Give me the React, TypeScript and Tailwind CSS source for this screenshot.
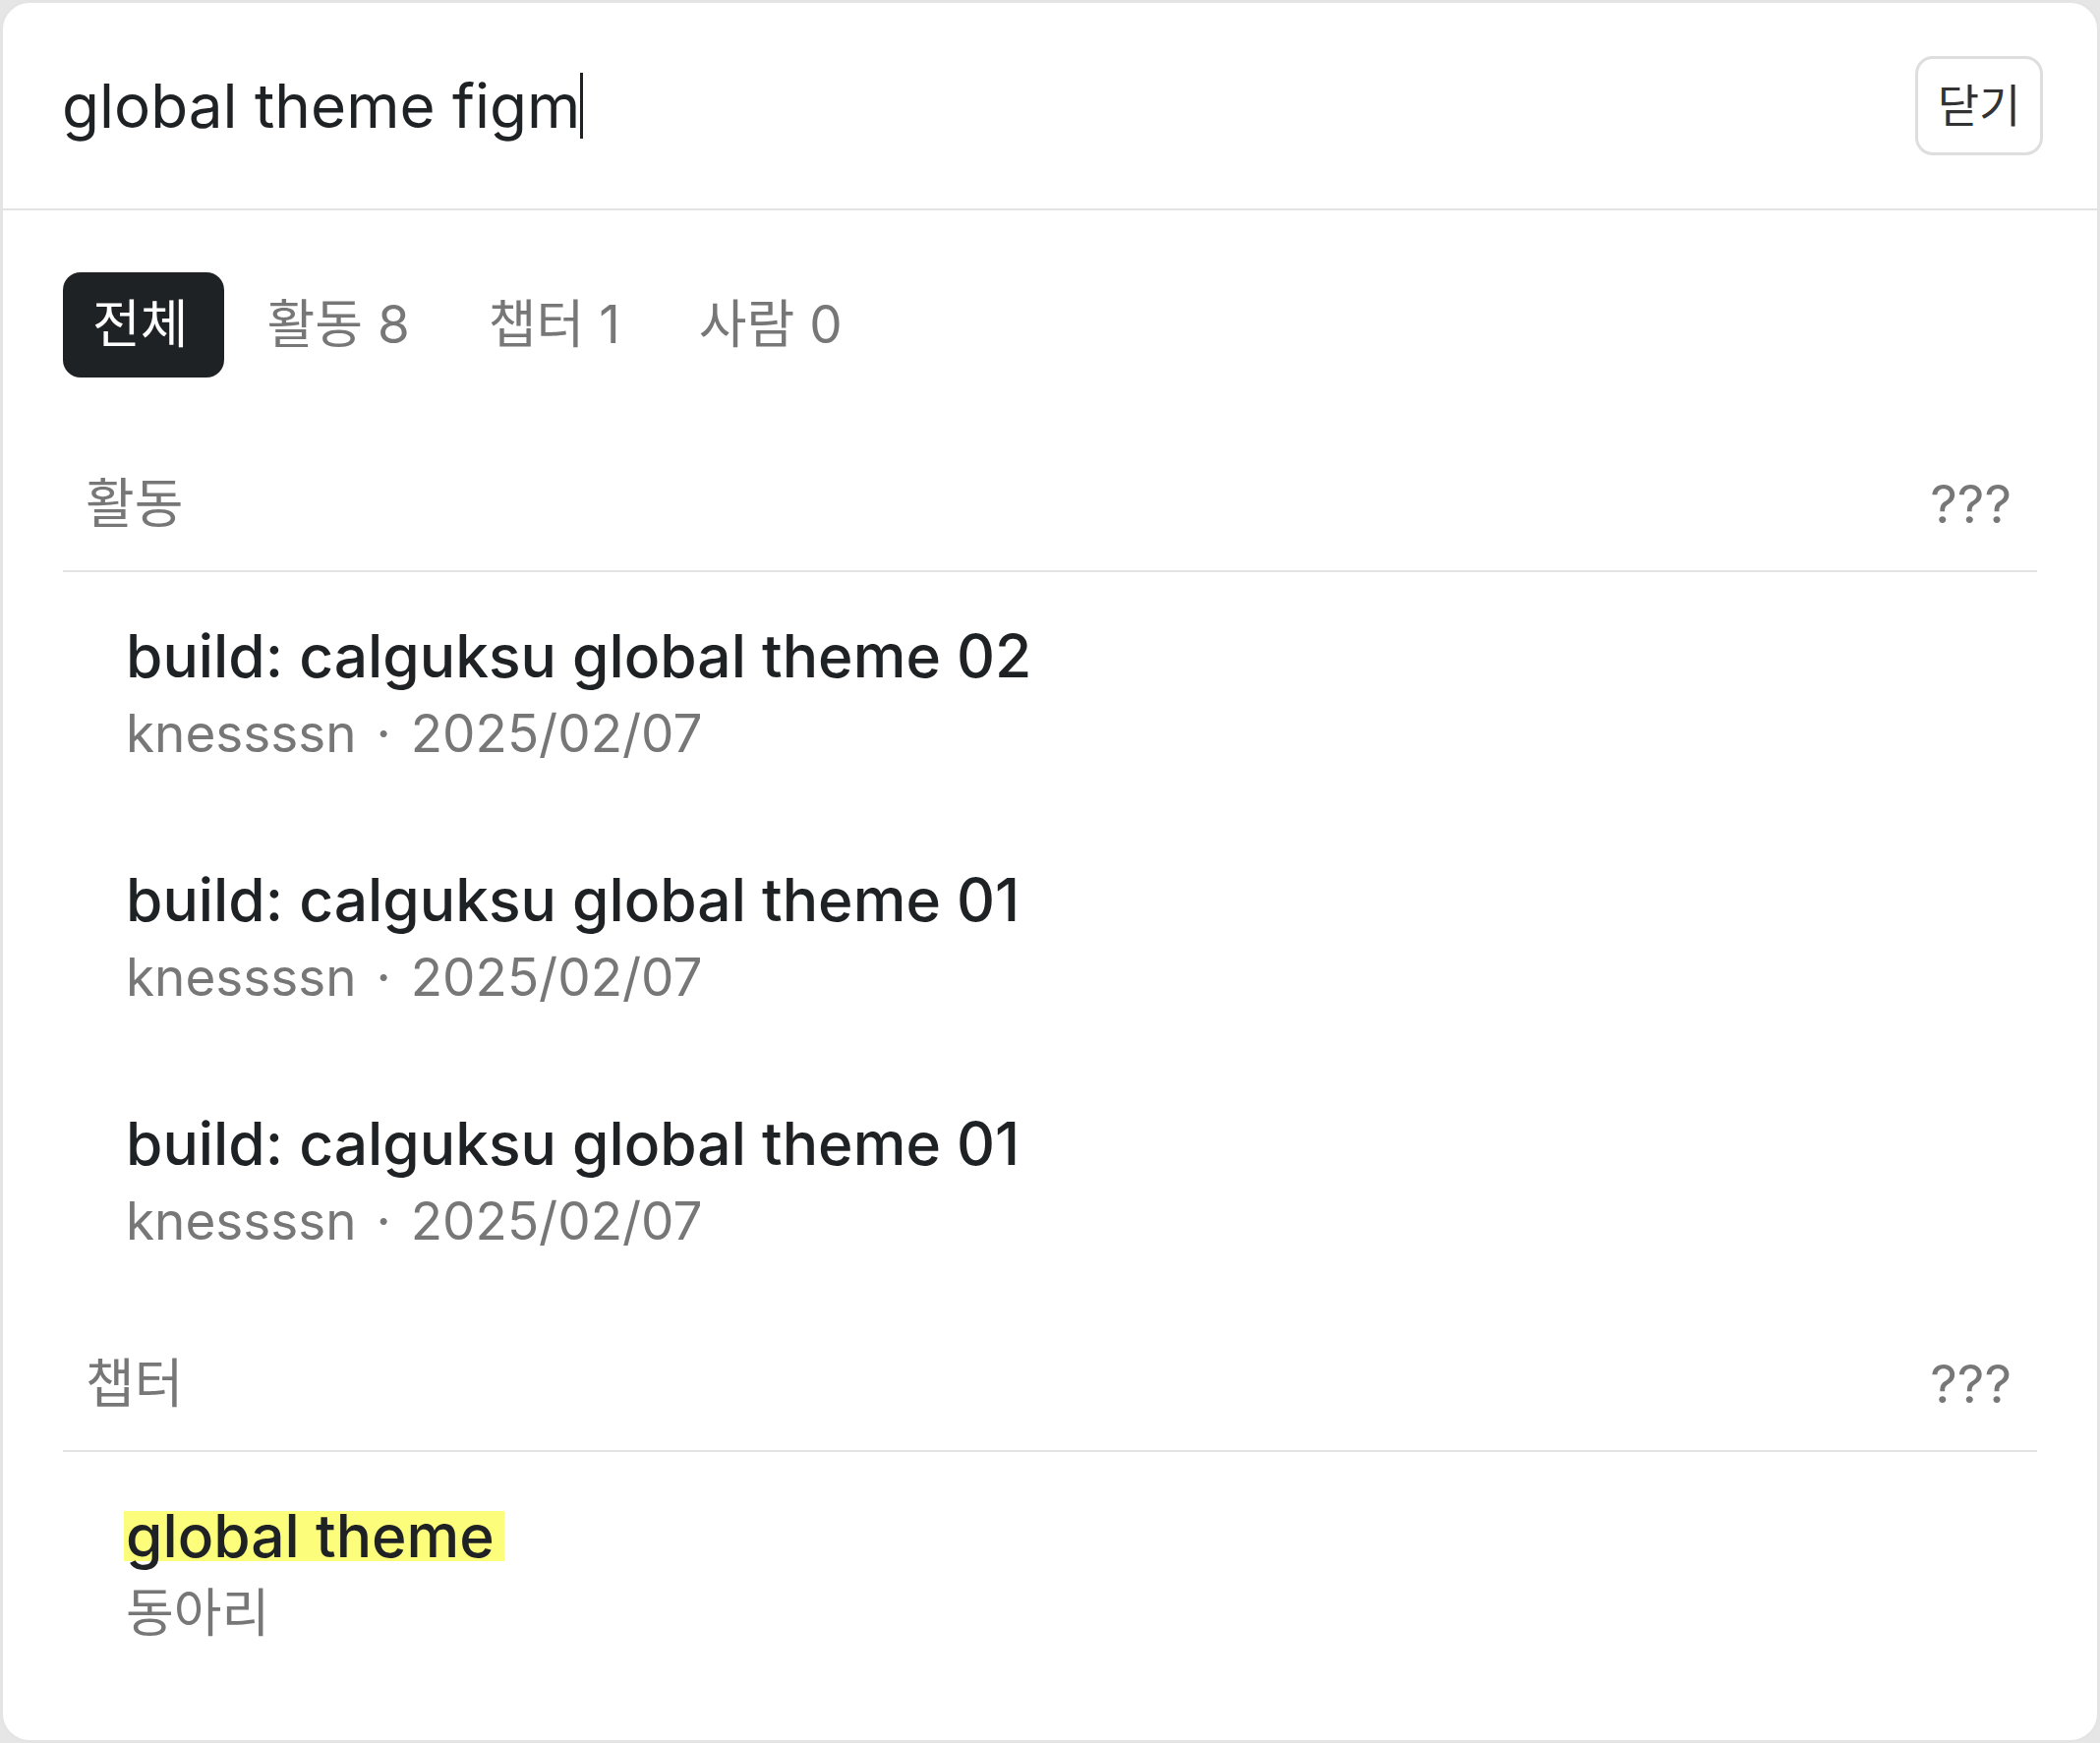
import React from "react";

const FONT = { fontFamily: 'Inter, "Noto Sans CJK KR", sans-serif' };

const activities = [
  { title: "build: calguksu global theme 02", author: "knessssn", date: "2025/02/07" },
  { title: "build: calguksu global theme 01", author: "knessssn", date: "2025/02/07" },
  { title: "build: calguksu global theme 01", author: "knessssn", date: "2025/02/07" },
];

const tabs = [
  { label: "전체", active: true },
  { label: "활동 8" },
  { label: "챕터 1" },
  { label: "사람 0" },
];

function SectionHeader({ title }: { title: string }) {
  return (
    <div className="flex justify-between items-center border-b-2 border-[#e3e3e3] pl-[23px] pr-[26px] h-[138px] text-[#777777] text-[54px]">
      <span>{title}</span>
      <span>???</span>
    </div>
  );
}

function Item({ title, meta, highlight }: { title: string; meta: React.ReactNode; highlight?: boolean }) {
  return (
    <div className="flex flex-col py-[45px] pl-[64px]">
      <div className="font-medium text-[#1f2224] text-[60.5px] leading-[80px]">
        {highlight ? (
          <span className="inline-block bg-[#fdfd7c] pr-[10px] pl-[2px] -ml-[2px] h-[51px] leading-[51px]">{title}</span>
        ) : (
          title
        )}
      </div>
      <div className="text-[#777777] text-[53px] leading-[78px]">{meta}</div>
    </div>
  );
}

export default function App() {
  return (
    <div className="bg-[#e6e6e6] min-h-screen" style={FONT}>
      <div className="flex flex-col bg-white border-[#e4e4e4] border-[3px] rounded-[30px] min-h-screen">
        {/* search bar */}
        <div className="flex justify-between items-center border-[#e3e3e3] border-b-2 pr-[55px] pl-[60px] h-[211px]">
          <div className="flex items-center text-[#1f2224] text-[62px]">
            <span>global theme figm</span>
            <span className="inline-block bg-[#1f2224] w-[3px] h-[67px]" />
          </div>
          <button className="flex justify-center items-center bg-white border-[#dedede] border-[3px] rounded-[18px] w-[130px] h-[101px] text-[#333333] text-[46px]">
            닫기
          </button>
        </div>

        <div className="flex flex-col px-[61px] pb-[43px]">
          {/* tabs */}
          <div className="flex gap-[14px] mt-[63px]">
            {tabs.map((t) => (
              <div
                key={t.label}
                className={
                  t.active
                    ? "flex items-center bg-[#1f2224] pl-[30px] pr-[36px] rounded-[18px] h-[107px] text-[53px] text-white"
                    : "flex items-center pl-[30px] pr-[36px] rounded-[18px] h-[107px] text-[#777777] text-[53px]"
                }
              >
                {t.label}
              </div>
            ))}
          </div>

          {/* activities */}
          <div className="mt-[60px]">
            <SectionHeader title="활동" />
            {activities.map((a, i) => (
              <Item
                key={i}
                title={a.title}
                meta={
                  <>
                    {a.author}
                    <span className="mx-[20px]">·</span>
                    {a.date}
                  </>
                }
              />
            ))}
          </div>

          {/* chapters */}
          <div className="mt-[13px]">
            <SectionHeader title="챕터" />
            <Item title="global theme" meta="동아리" highlight />
          </div>
        </div>
      </div>
    </div>
  );
}
